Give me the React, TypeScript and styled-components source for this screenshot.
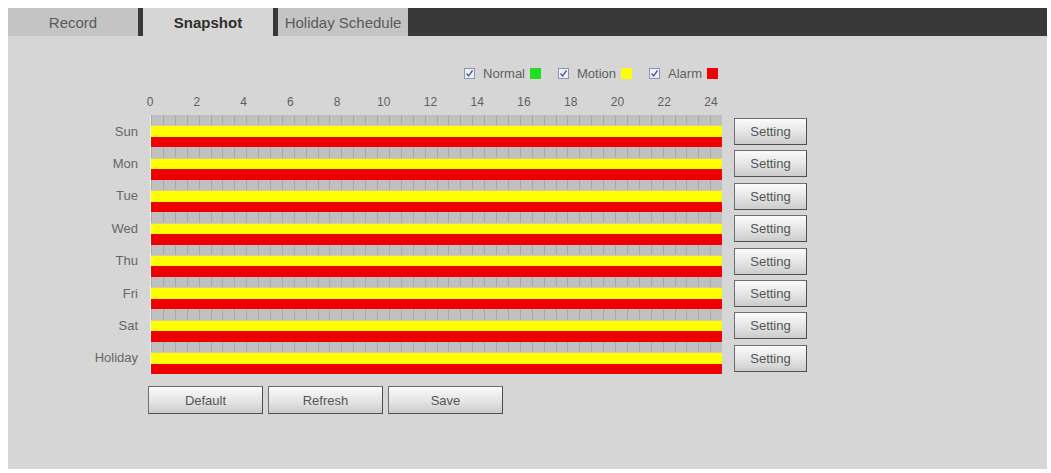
import React from 'react';
import styled, { createGlobalStyle } from 'styled-components';

const GlobalStyle = createGlobalStyle`
  body {
    margin: 0;
    background: #ffffff;
    font-family: 'Liberation Sans', Arial, sans-serif;
  }
`;

const Page = styled.div`
  padding: 8px 4px 4px 8px;
`;

const Panel = styled.div`
  width: 1039px;
  height: 461px;
  background: #d6d6d6;
  display: flex;
  flex-direction: column;
`;

const TabBar = styled.div`
  display: flex;
  height: 28px;
  background: #383838;
`;

const Tab = styled.div<{ $active?: boolean }>`
  width: 130px;
  margin-right: 5px;
  display: flex;
  align-items: center;
  justify-content: center;
  font-size: 15px;
  background: ${(p) => (p.$active ? '#d6d6d6' : '#c4c4c4')};
  color: ${(p) => (p.$active ? '#2e2e2e' : '#5a5a5a')};
  font-weight: ${(p) => (p.$active ? 700 : 400)};
`;

const Body = styled.div`
  padding-top: 30px;
  display: flex;
  flex-direction: column;
`;

const Grid = styled.div`
  display: grid;
  grid-template-columns: 130px 572px 73px;
  column-gap: 12px;
`;

const Legend = styled.div`
  grid-column: 2;
  display: flex;
  justify-content: flex-end;
  align-items: center;
  height: 14px;
  padding-right: 4px;
  font-size: 13px;
  color: #5f5f5f;
`;

const LegendItem = styled.div`
  display: flex;
  align-items: center;
  margin-left: 17px;
`;

const Check = styled.span`
  width: 11px;
  height: 11px;
  box-sizing: border-box;
  border: 1px solid #8796b4;
  background: #eef0f6;
  display: inline-flex;
  align-items: center;
  justify-content: center;
  margin-right: 8px;
`;

const Swatch = styled.span<{ $color: string }>`
  width: 11px;
  height: 11px;
  margin-left: 5px;
  background: ${(p) => p.$color};
`;

const HourScale = styled.div`
  grid-column: 2;
  margin: 16px 1px 6px -10px;
  display: flex;
  justify-content: space-between;
  font-size: 12px;
  color: #5f5f5f;
  line-height: 13px;
`;

const Hour = styled.span`
  width: 20px;
  text-align: center;
`;

const DayLabel = styled.div`
  grid-column: 1;
  height: 32.4px;
  display: flex;
  align-items: center;
  justify-content: flex-end;
  font-size: 13px;
  color: #666;
`;

const Track = styled.div`
  grid-column: 2;
  height: 32.4px;
  display: flex;
  flex-direction: column;
  border-left: 1px solid #eef0f6;
`;

const Ticks = styled.div`
  height: 10.4px;
  background-color: #c0c0c0;
  background-image: repeating-linear-gradient(
    to right,
    #a8a8a8 0,
    #a8a8a8 1px,
    transparent 1px,
    transparent 11.9px
  );
  border-bottom: 1px solid #d8c8a0;
`;

const Band = styled.div<{ $color: string }>`
  flex: 1;
  background: ${(p) => p.$color};
`;

const SettingCell = styled.div`
  grid-column: 3;
  height: 32.4px;
  padding-top: 3px;
  box-sizing: border-box;
`;

const Button = styled.button<{ $w: number; $h?: number }>`
  width: ${(p) => p.$w}px;
  height: ${(p) => p.$h ?? 28}px;
  padding: 0;
  border: 1px solid #6e6e6e;
  border-right-color: #505050;
  border-bottom-color: #505050;
  background: linear-gradient(#fbfbfb, #e4e4e4 55%, #cccccc);
  font-family: 'Liberation Sans', Arial, sans-serif;
  font-size: 13px;
  color: #555;
`;

const Actions = styled.div`
  display: flex;
  gap: 5px;
  margin: 12px 0 0 140px;
`;

const CheckMark = () => (
  <svg width="9" height="9" viewBox="0 0 9 9">
    <path d="M1.5 4.5 L3.6 7 L7.5 1.5" fill="none" stroke="#4a5a86" strokeWidth="1.3" />
  </svg>
);

const days = ['Sun', 'Mon', 'Tue', 'Wed', 'Thu', 'Fri', 'Sat', 'Holiday'];
const hours = [0, 2, 4, 6, 8, 10, 12, 14, 16, 18, 20, 22, 24];
const legend = [
  { label: 'Normal', color: '#22dd22' },
  { label: 'Motion', color: '#ffff00' },
  { label: 'Alarm', color: '#ee0000' },
];

const App: React.FC = () => (
  <>
    <GlobalStyle />
    <Page>
      <Panel>
        <TabBar>
          <Tab>Record</Tab>
          <Tab $active>Snapshot</Tab>
          <Tab>Holiday Schedule</Tab>
        </TabBar>
        <Body>
          <Grid>
            <Legend>
              {legend.map((l) => (
                <LegendItem key={l.label}>
                  <Check>
                    <CheckMark />
                  </Check>
                  {l.label}
                  <Swatch $color={l.color} />
                </LegendItem>
              ))}
            </Legend>
            <HourScale>
              {hours.map((h) => (
                <Hour key={h}>{h}</Hour>
              ))}
            </HourScale>
            {days.map((d) => (
              <React.Fragment key={d}>
                <DayLabel>{d}</DayLabel>
                <Track>
                  <Ticks />
                  <Band $color="#ffff00" />
                  <Band $color="#ee0000" />
                </Track>
                <SettingCell>
                  <Button $w={73} $h={27}>
                    Setting
                  </Button>
                </SettingCell>
              </React.Fragment>
            ))}
          </Grid>
          <Actions>
            <Button $w={115}>Default</Button>
            <Button $w={115}>Refresh</Button>
            <Button $w={115}>Save</Button>
          </Actions>
        </Body>
      </Panel>
    </Page>
  </>
);

export default App;
